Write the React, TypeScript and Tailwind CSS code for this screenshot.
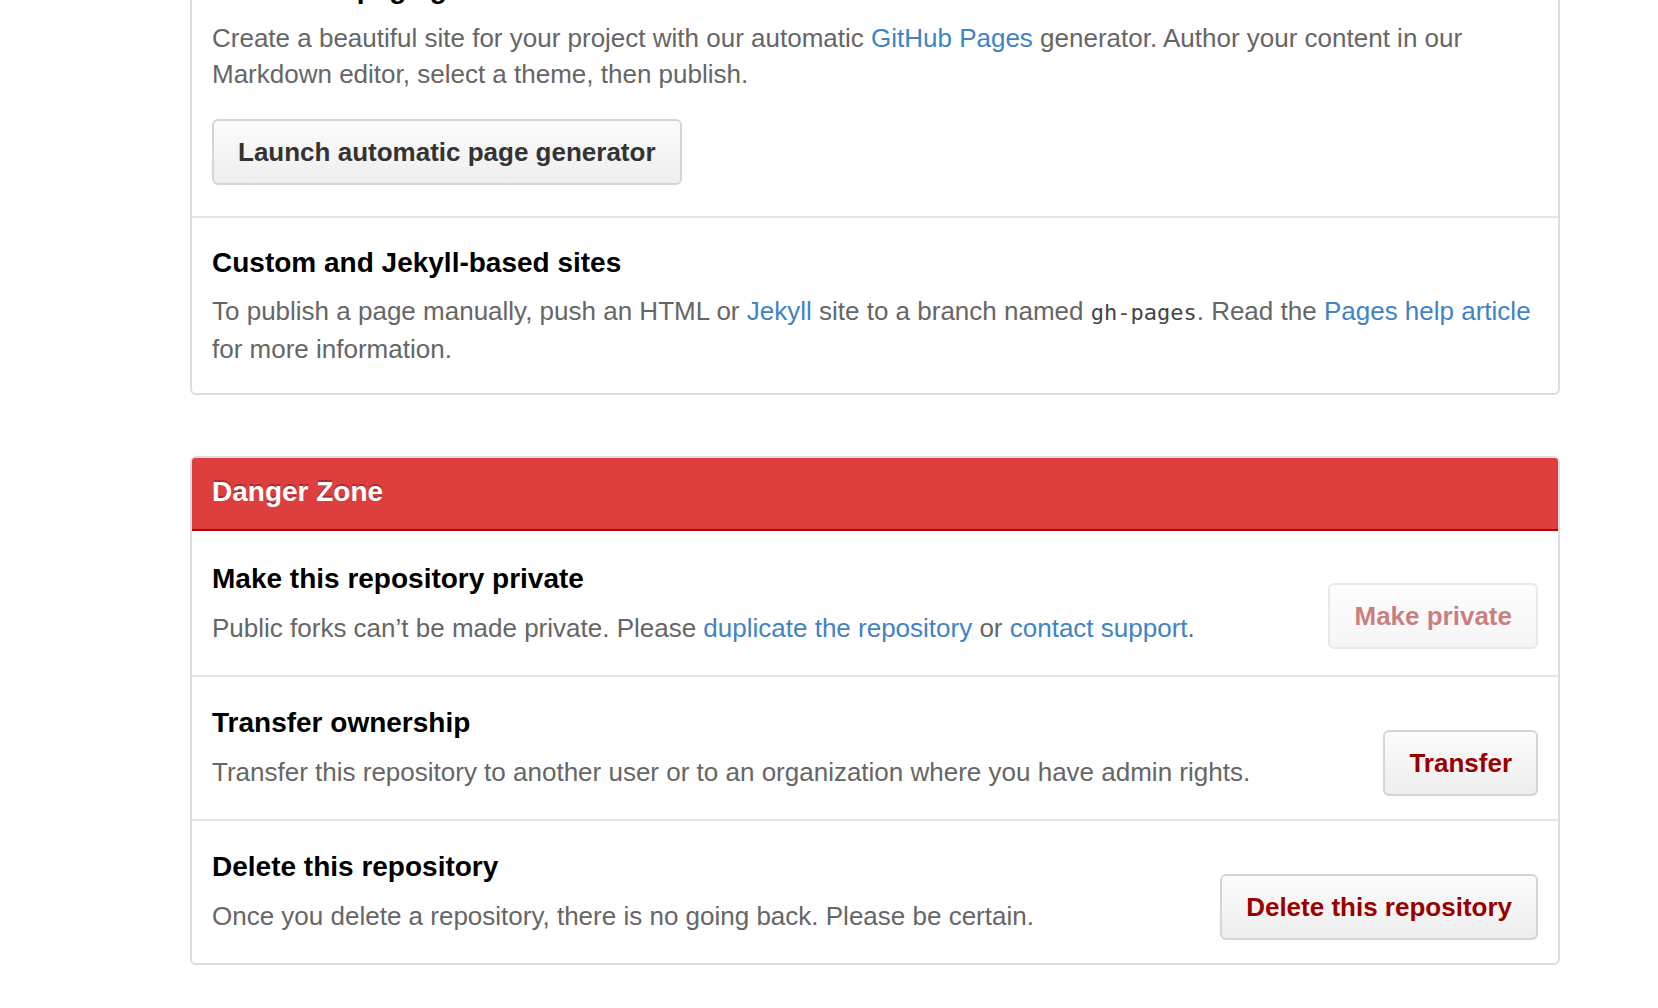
import React from 'react';

const font = "font-['Liberation_Sans',Arial,sans-serif]";

function Btn({ children, danger, disabled }: { children: React.ReactNode; danger?: boolean; disabled?: boolean }) {
  return (
    <button
      className={`h-[66px] px-[24px] rounded-[6px] border-2 border-[#d5d5d5] bg-gradient-to-b from-[#fcfcfc] to-[#eeeeee] text-[26px] font-bold whitespace-nowrap ${
        danger ? 'text-[#990000]' : 'text-[#333333]'
      } ${disabled ? 'opacity-50' : ''}`}
    >
      {children}
    </button>
  );
}

function DangerRow({ title, children, action, first, last }: { title: string; children: React.ReactNode; action: React.ReactNode; first?: boolean; last?: boolean }) {
  return (
    <div
      className={`flex items-start justify-between px-[20px] ${first ? 'pt-[32px] pb-[26px]' : 'pt-[28px] pb-[23px]'} ${
        last ? '' : 'border-b-2 border-[#e5e5e5]'
      }`}
    >
      <div>
        <h4 className="text-[28px] leading-[36px] font-bold text-black">{title}</h4>
        <p className="mt-[13px] text-[26px] leading-[36px] text-[#666666]">{children}</p>
      </div>
      <div className={`${first ? 'mt-[22px]' : 'mt-[25px]'} shrink-0`}>{action}</div>
    </div>
  );
}

const A = ({ children }: { children: React.ReactNode }) => <a className="text-[#4183c4]">{children}</a>;

export default function App() {
  return (
    <div className={`min-h-screen w-full bg-white overflow-hidden ${font}`}>
      <div className="ml-[190px] w-[1370px]">
        <div className="-mt-[58px] border-2 border-[#dddddd] rounded-[6px]">
          <div className="px-[20px] pt-[27px] pb-[31px] border-b-2 border-[#e5e5e5]">
            <h4 className="text-[28px] leading-[36px] font-bold text-black">Automatic page generator</h4>
            <p className="mt-[13px] text-[26px] leading-[36px] text-[#666666]">
              Create a beautiful site for your project with our automatic <A>GitHub Pages</A> generator. Author your content in our Markdown editor, select a theme, then publish.
            </p>
            <div className="mt-[27px]">
              <Btn>Launch automatic page generator</Btn>
            </div>
          </div>
          <div className="px-[20px] pt-[27px] pb-[26px]">
            <h4 className="text-[28px] leading-[36px] font-bold text-black">Custom and Jekyll-based sites</h4>
            <p className="mt-[12px] text-[26px] leading-[36px] text-[#666666]">
              To publish a page manually, push an HTML or <A>Jekyll</A> site to a branch named{' '}
              <code className="font-['DejaVu_Sans_Mono',monospace] text-[22px] text-[#444444]">gh-pages</code>. Read the{' '}
              <A>Pages help article</A> for more information.
            </p>
          </div>
        </div>

        <div className="mt-[61px] border-2 border-[#dddddd] rounded-[6px] overflow-hidden">
          <div className="bg-[#dd3e3e] border-2 border-[#b00000] -m-[2px] rounded-t-[6px] px-[20px] pt-[16px] pb-[19px]">
            <h3 className="text-[28px] leading-[36px] font-bold text-white [text-shadow:0_-2px_0_rgba(0,0,0,0.25)]">Danger Zone</h3>
          </div>
          <DangerRow title="Make this repository private" action={<Btn danger disabled>Make private</Btn>} first>
            Public forks can’t be made private. Please <A>duplicate the repository</A> or <A>contact support</A>.
          </DangerRow>
          <DangerRow title="Transfer ownership" action={<Btn danger>Transfer</Btn>}>
            Transfer this repository to another user or to an organization where you have admin rights.
          </DangerRow>
          <DangerRow title="Delete this repository" action={<Btn danger>Delete this repository</Btn>} last>
            Once you delete a repository, there is no going back. Please be certain.
          </DangerRow>
        </div>
      </div>
    </div>
  );
}
